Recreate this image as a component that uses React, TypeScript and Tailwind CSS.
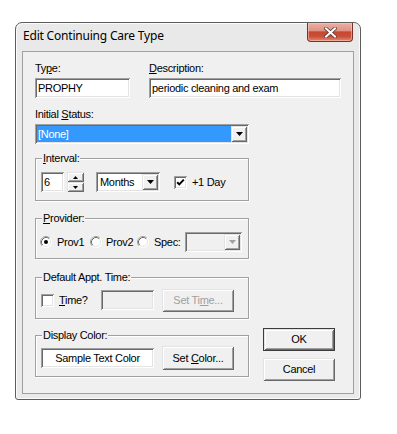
import React from "react";

const sunken =
  "shadow-[inset_1px_1px_0_#a0a0a0,inset_-1px_-1px_0_#ffffff,inset_2px_2px_0_#696969,inset_-2px_-2px_0_#e3e3e3]";
const raised =
  "shadow-[inset_1px_1px_0_#e3e3e3,inset_-1px_-1px_0_#696969,inset_2px_2px_0_#ffffff,inset_-2px_-2px_0_#a0a0a0]";

function Tri({ color = "#000" }: { color?: string }) {
  return (
    <svg width="7" height="4" viewBox="0 0 7 4">
      <path d="M0 0H7L3.5 4Z" fill={color} />
    </svg>
  );
}

function DropBtn({ disabled = false }: { disabled?: boolean }) {
  return (
    <div className={`w-[16px] h-[16px] bg-[#f0f0f0] flex items-center justify-center ${raised}`}>
      <Tri color={disabled ? "#a0a0a0" : "#000"} />
    </div>
  );
}

function CheckBox({ checked }: { checked: boolean }) {
  return (
    <div className={`w-[13px] h-[13px] bg-white shrink-0 flex items-center justify-center ${sunken}`}>
      {checked && (
        <svg width="13" height="13" viewBox="0 0 13 13">
          <path d="M3.2 6.2 L5.3 8.4 L9.8 3.6" stroke="#000" strokeWidth="2" fill="none" />
        </svg>
      )}
    </div>
  );
}

function Radio({ checked }: { checked: boolean }) {
  return (
    <svg width="12" height="12" viewBox="0 0 12 12" className="shrink-0">
      <circle cx="6" cy="6" r="5.5" fill="#ffffff" />
      <path d="M2.11 9.89 A5.5 5.5 0 0 1 9.89 2.11" stroke="#a0a0a0" strokeWidth="1" fill="none" />
      <path d="M9.89 2.11 A5.5 5.5 0 0 1 2.11 9.89" stroke="#ffffff" strokeWidth="1" fill="none" />
      <path d="M2.82 9.18 A4.5 4.5 0 0 1 9.18 2.82" stroke="#696969" strokeWidth="1" fill="none" />
      <path d="M9.18 2.82 A4.5 4.5 0 0 1 2.82 9.18" stroke="#e3e3e3" strokeWidth="1" fill="none" />
      {checked && <circle cx="6" cy="6" r="2" fill="#000" />}
    </svg>
  );
}

function Btn({
  children,
  w,
  h,
  disabled = false,
  def = false,
}: {
  children: React.ReactNode;
  w: string;
  h: string;
  disabled?: boolean;
  def?: boolean;
}) {
  return (
    <div
      className={`${w} ${h} bg-[#f0f0f0] flex items-center justify-center shrink-0 ${
        def ? "border border-[#3c3c3c]" : ""
      } ${raised} ${disabled ? "text-[#a0a0a0]" : "text-black"}`}
    >
      {children}
    </div>
  );
}

function Group({
  label,
  h,
  children,
  className = "",
}: {
  label: React.ReactNode;
  h: string;
  children: React.ReactNode;
  className?: string;
}) {
  return (
    <div
      className={`relative w-[214px] ${h} border border-[#a0a0a0] shadow-[inset_1px_1px_0_#ffffff,1px_1px_0_#ffffff] ${className}`}
    >
      <span className="absolute -top-[7px] left-[6px] bg-[#f0f0f0] px-[1px] leading-[13px]">{label}</span>
      {children}
    </div>
  );
}

export default function App() {
  return (
    <div className="w-[397px] h-[434px] bg-white pt-[22px] pl-[15px] font-['Liberation_Sans',Arial,sans-serif] text-[11px] leading-[13px] tracking-[-0.3px] text-black">
      <div className="w-[346px] h-[378px] border border-[#5c5c5c] rounded-t-[7px] rounded-b-[3px] bg-[#e9e9e9] shadow-[inset_1px_1px_0_#fbfbfb,inset_-1px_-1px_0_#fbfbfb] flex flex-col px-[6px] pb-[5px]">
        {/* title bar */}
        <div className="h-[28px] flex items-start justify-between shrink-0">
          <span className="pt-[5px] pl-[1px] font-['Noto_Sans',sans-serif] text-[12px] leading-[16px] tracking-[-0.2px] text-black">
            Edit Continuing Care Type
          </span>
          <div className="mr-[1px] w-[46px] h-[19px] border border-t-0 border-[#7a3226] rounded-b-[4px] bg-[linear-gradient(to_bottom,#eab0a2_0%,#de9384_42%,#c6472f_50%,#c9503a_75%,#df8a6c_100%)] flex items-center justify-center shadow-[inset_0_0_0_1px_rgba(255,210,200,0.5)]">
            <svg width="13" height="11" viewBox="0 0 13 11">
              <path d="M2 1.5 L11 9.5 M11 1.5 L2 9.5" stroke="#5a3a36" strokeWidth="3.6" strokeLinecap="square" />
              <path d="M2 1.5 L11 9.5 M11 1.5 L2 9.5" stroke="#ffffff" strokeWidth="2" strokeLinecap="square" />
            </svg>
          </div>
        </div>
        {/* client */}
        <div className="flex-1 border border-[#a0a0a0] bg-[#f0f0f0] pl-[12px] pt-[10px] flex flex-col">
          <div className="flex gap-[19px]">
            <div className="flex flex-col">
              <span>
                Ty<u>p</u>e:
              </span>
              <div className={`mt-[3px] w-[95px] h-[20px] bg-white ${sunken} flex items-center pl-[3px]`}>PROPHY</div>
            </div>
            <div className="flex flex-col">
              <span>
                <u>D</u>escription:
              </span>
              <div className={`mt-[3px] w-[192px] h-[20px] bg-white ${sunken} flex items-center pl-[3px]`}>
                periodic cleaning and exam
              </div>
            </div>
          </div>
          <span className="mt-[10px]">
            Initial <u>S</u>tatus:
          </span>
          <div className={`mt-[3px] w-[214px] h-[20px] bg-white ${sunken} p-[2px] flex`}>
            <div className="flex-1 bg-[#3399ff] text-white flex items-center pl-[1px]">[None]</div>
            <DropBtn />
          </div>
          <div className="flex mt-[14px] gap-[14px]">
            <div className="flex flex-col w-[214px]">
              <Group
                h="h-[43px]"
                label={
                  <>
                    <u>I</u>nterval:
                  </>
                }
              >
                <div className="pt-[13px] pl-[5px] flex items-center h-[33px]">
                  <div className={`w-[23px] h-[20px] bg-white ${sunken} flex items-center pl-[3px]`}>6</div>
                  <div className="ml-[3px] w-[17px] h-[20px] flex flex-col">
                    <div className={`h-[10px] bg-[#f0f0f0] ${raised} flex items-center justify-center`}>
                      <svg width="5" height="3" viewBox="0 0 5 3">
                        <path d="M0 3H5L2.5 0Z" fill="#000" />
                      </svg>
                    </div>
                    <div className={`h-[10px] bg-[#f0f0f0] ${raised} flex items-center justify-center`}>
                      <svg width="5" height="3" viewBox="0 0 5 3">
                        <path d="M0 0H5L2.5 3Z" fill="#000" />
                      </svg>
                    </div>
                  </div>
                  <div className={`ml-[12px] w-[64px] h-[20px] bg-white ${sunken} p-[2px] flex`}>
                    <div className="flex-1 flex items-center pl-[2px]">Months</div>
                    <DropBtn />
                  </div>
                  <div className="ml-[14px]">
                    <CheckBox checked />
                  </div>
                  <span className="ml-[5px]">+1 Day</span>
                </div>
              </Group>
              <Group
                h="h-[41px]"
                className="mt-[17px]"
                label={
                  <>
                    <u>P</u>rovider:
                  </>
                }
              >
                <div className="pt-[13px] pl-[4px] flex items-center h-[33px]">
                  <div className="w-[50px] flex items-center gap-[5px]">
                    <Radio checked />
                    <span>Prov1</span>
                  </div>
                  <div className="w-[47px] flex items-center gap-[4px]">
                    <Radio checked={false} />
                    <span>Prov2</span>
                  </div>
                  <div className="flex items-center gap-[5px]">
                    <Radio checked={false} />
                    <span className="w-[31px]">Spec:</span>
                  </div>
                  <div className={`w-[57px] h-[20px] bg-[#f0f0f0] ${sunken} p-[2px] flex`}>
                    <div className="flex-1" />
                    <DropBtn disabled />
                  </div>
                </div>
              </Group>
              <Group h="h-[42px]" className="mt-[18px]" label="Default Appt. Time:">
                <div className="pt-[10px] pl-[5px] flex items-center h-[34px]">
                  <CheckBox checked={false} />
                  <span className="ml-[5px] w-[42px]">
                    <u>T</u>ime?
                  </span>
                  <div className={`w-[53px] h-[20px] bg-[#f0f0f0] ${sunken}`} />
                  <div className="ml-[8px]">
                    <Btn w="w-[72px]" h="h-[23px]" disabled>
                      <span>
                        Set Ti<u>m</u>e...
                      </span>
                    </Btn>
                  </div>
                </div>
              </Group>
              <Group h="h-[42px]" className="mt-[16px]" label="Display Color:">
                <div className="pt-[10px] pl-[5px] flex items-center h-[34px]">
                  <div className={`w-[113px] h-[20px] bg-white ${sunken} flex items-center justify-center`}>
                    Sample Text Color
                  </div>
                  <div className="ml-[8px]">
                    <Btn w="w-[72px]" h="h-[24px]">
                      <span>
                        Set <u>C</u>olor...
                      </span>
                    </Btn>
                  </div>
                </div>
              </Group>
            </div>
            <div className="flex flex-col pt-[170px] gap-[7px]">
              <Btn w="w-[72px]" h="h-[23px]" def>
                OK
              </Btn>
              <Btn w="w-[72px]" h="h-[23px]">
                Cancel
              </Btn>
            </div>
          </div>
        </div>
      </div>
    </div>
  );
}
